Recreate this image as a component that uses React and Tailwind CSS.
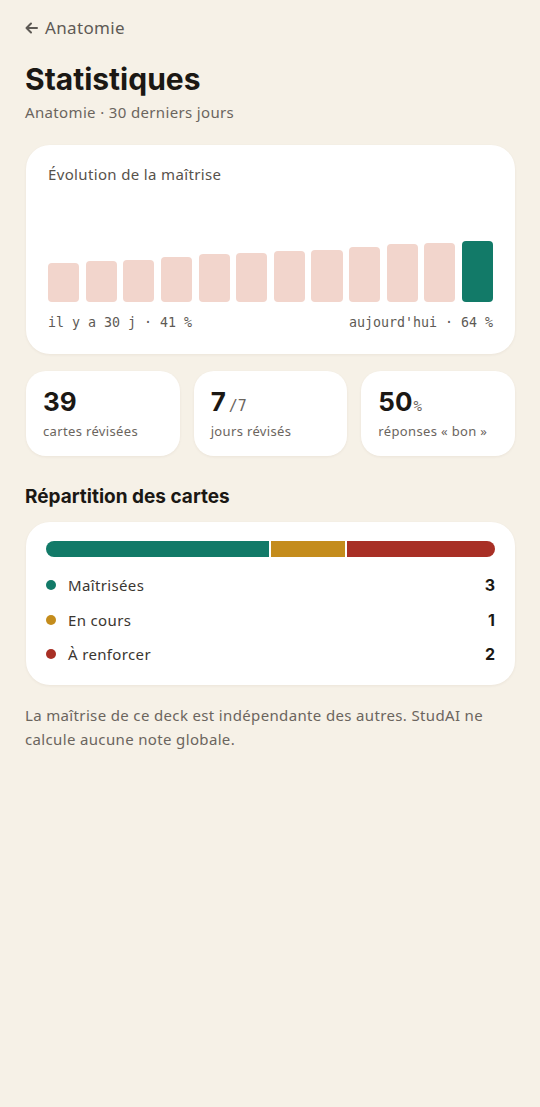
const BARS = [41, 43, 44, 47, 50, 51, 53, 54, 57, 60, 61, 64];

const LEGEND = [
  { label: 'Maîtrisées', count: 3, dot: 'bg-[#127a68]' },
  { label: 'En cours', count: 1, dot: 'bg-[#c48c1c]' },
  { label: 'À renforcer', count: 2, dot: 'bg-[#a82f25]' },
];

const sans = "font-['Noto_Sans',sans-serif] tracking-[0.35px]";
const head = "font-['Inter',sans-serif] tracking-normal";
const mono = "font-['DejaVu_Sans_Mono',monospace] tracking-normal";

export default function App() {
  return (
    <div className={`min-h-[1107px] bg-[#f6f1e7] px-[25px] pt-[17px] pb-10 ${sans}`}>
      <div className="flex items-center gap-[7px] text-[17px] leading-[22px] text-[#5e5a55]">
        <svg width="13" height="12" viewBox="0 0 13 12" fill="none" stroke="currentColor" strokeWidth="2" strokeLinecap="round" strokeLinejoin="round">
          <path d="M12 6H1.5M6 1.5 1.5 6 6 10.5" />
        </svg>
        Anatomie
      </div>

      <h1 className={`${head} mt-[22px] text-[30px] leading-[36px] font-bold tracking-[-0.2px] text-[#1b1814]`}>
        Statistiques
      </h1>
      <p className="mt-[4px] text-[15px] leading-[22px] text-[#6b655e]">Anatomie · 30 derniers jours</p>

      {/* Mastery evolution */}
      <div className="mt-[22px] ml-px rounded-[24px] bg-white px-[22px] pt-[18px] pb-[22px] shadow-[0_1px_3px_rgba(60,40,20,0.06)]">
        <div className="text-[15px] leading-[22px] text-[#57524c]">Évolution de la maîtrise</div>
        <div className="mt-[21px] flex h-[96px] items-end gap-[6.5px]">
          {BARS.map((v, i) => (
            <div
              key={i}
              className={`flex-1 rounded-[4px] ${i === BARS.length - 1 ? 'bg-[#127a68]' : 'bg-[#f2d5cc]'}`}
              style={{ height: `${v}%` }}
            />
          ))}
        </div>
        <div className={`${mono} mt-[12px] flex justify-between text-[13.3px] leading-[18px] text-[#5e5a55]`}>
          <span>il y a 30 j · 41 %</span>
          <span>aujourd'hui · 64 %</span>
        </div>
      </div>

      {/* Stat tiles */}
      <div className="mt-[17px] ml-px grid grid-cols-3 gap-[14px]">
        <Stat value="39" label="cartes révisées" />
        <Stat value="7" suffix={<span className={`${mono} ml-[3px] text-[15px] leading-[20px] font-normal text-[#6b655e]`}>/7</span>} label="jours révisés" />
        <Stat value="50" suffix={<span className={`${mono} ml-px text-[14px] leading-[20px] font-normal text-[#6b655e]`}>%</span>} label="réponses « bon »" />
      </div>

      <h2 className={`${head} mt-[28px] text-[19px] leading-[26px] font-bold text-[#1b1814]`}>
        Répartition des cartes
      </h2>

      {/* Distribution */}
      <div className="mt-[12px] ml-px rounded-[24px] bg-white px-[20px] pt-[19px] pb-[13px] shadow-[0_1px_3px_rgba(60,40,20,0.06)]">
        <div className="flex h-[16px] gap-[2px] overflow-hidden rounded-full">
          <div className="flex-[3] bg-[#127a68]" />
          <div className="flex-[1] bg-[#c48c1c]" />
          <div className="flex-[2] bg-[#a82f25]" />
        </div>
        <div className="mt-[11px]">
          {LEGEND.map(item => (
            <div key={item.label} className="flex h-[34.5px] items-center">
              <span className={`h-[10px] w-[10px] rounded-full ${item.dot}`} />
              <span className="ml-[12px] flex-1 text-[15px] text-[#3a3631]">{item.label}</span>
              <span className={`${head} text-[16px] font-bold text-[#1b1814]`}>{item.count}</span>
            </div>
          ))}
        </div>
      </div>

      <p className="mt-[18px] text-[15px] leading-[24px] text-[#6b655e]">
        La maîtrise de ce deck est indépendante des autres. StudAI ne calcule aucune note globale.
      </p>
    </div>
  );
}

function Stat({ value, suffix, label }) {
  return (
    <div className="rounded-[20px] bg-white px-[17px] pt-[16px] pb-[16px] shadow-[0_1px_3px_rgba(60,40,20,0.06)]">
      <div className={`${head} flex h-[30px] items-baseline text-[26px] leading-[30px] font-bold text-[#1b1814]`}>
        {value}
        {suffix}
      </div>
      <div className="mt-[5px] text-[13px] leading-[18px] text-[#6b655e]">{label}</div>
    </div>
  );
}
